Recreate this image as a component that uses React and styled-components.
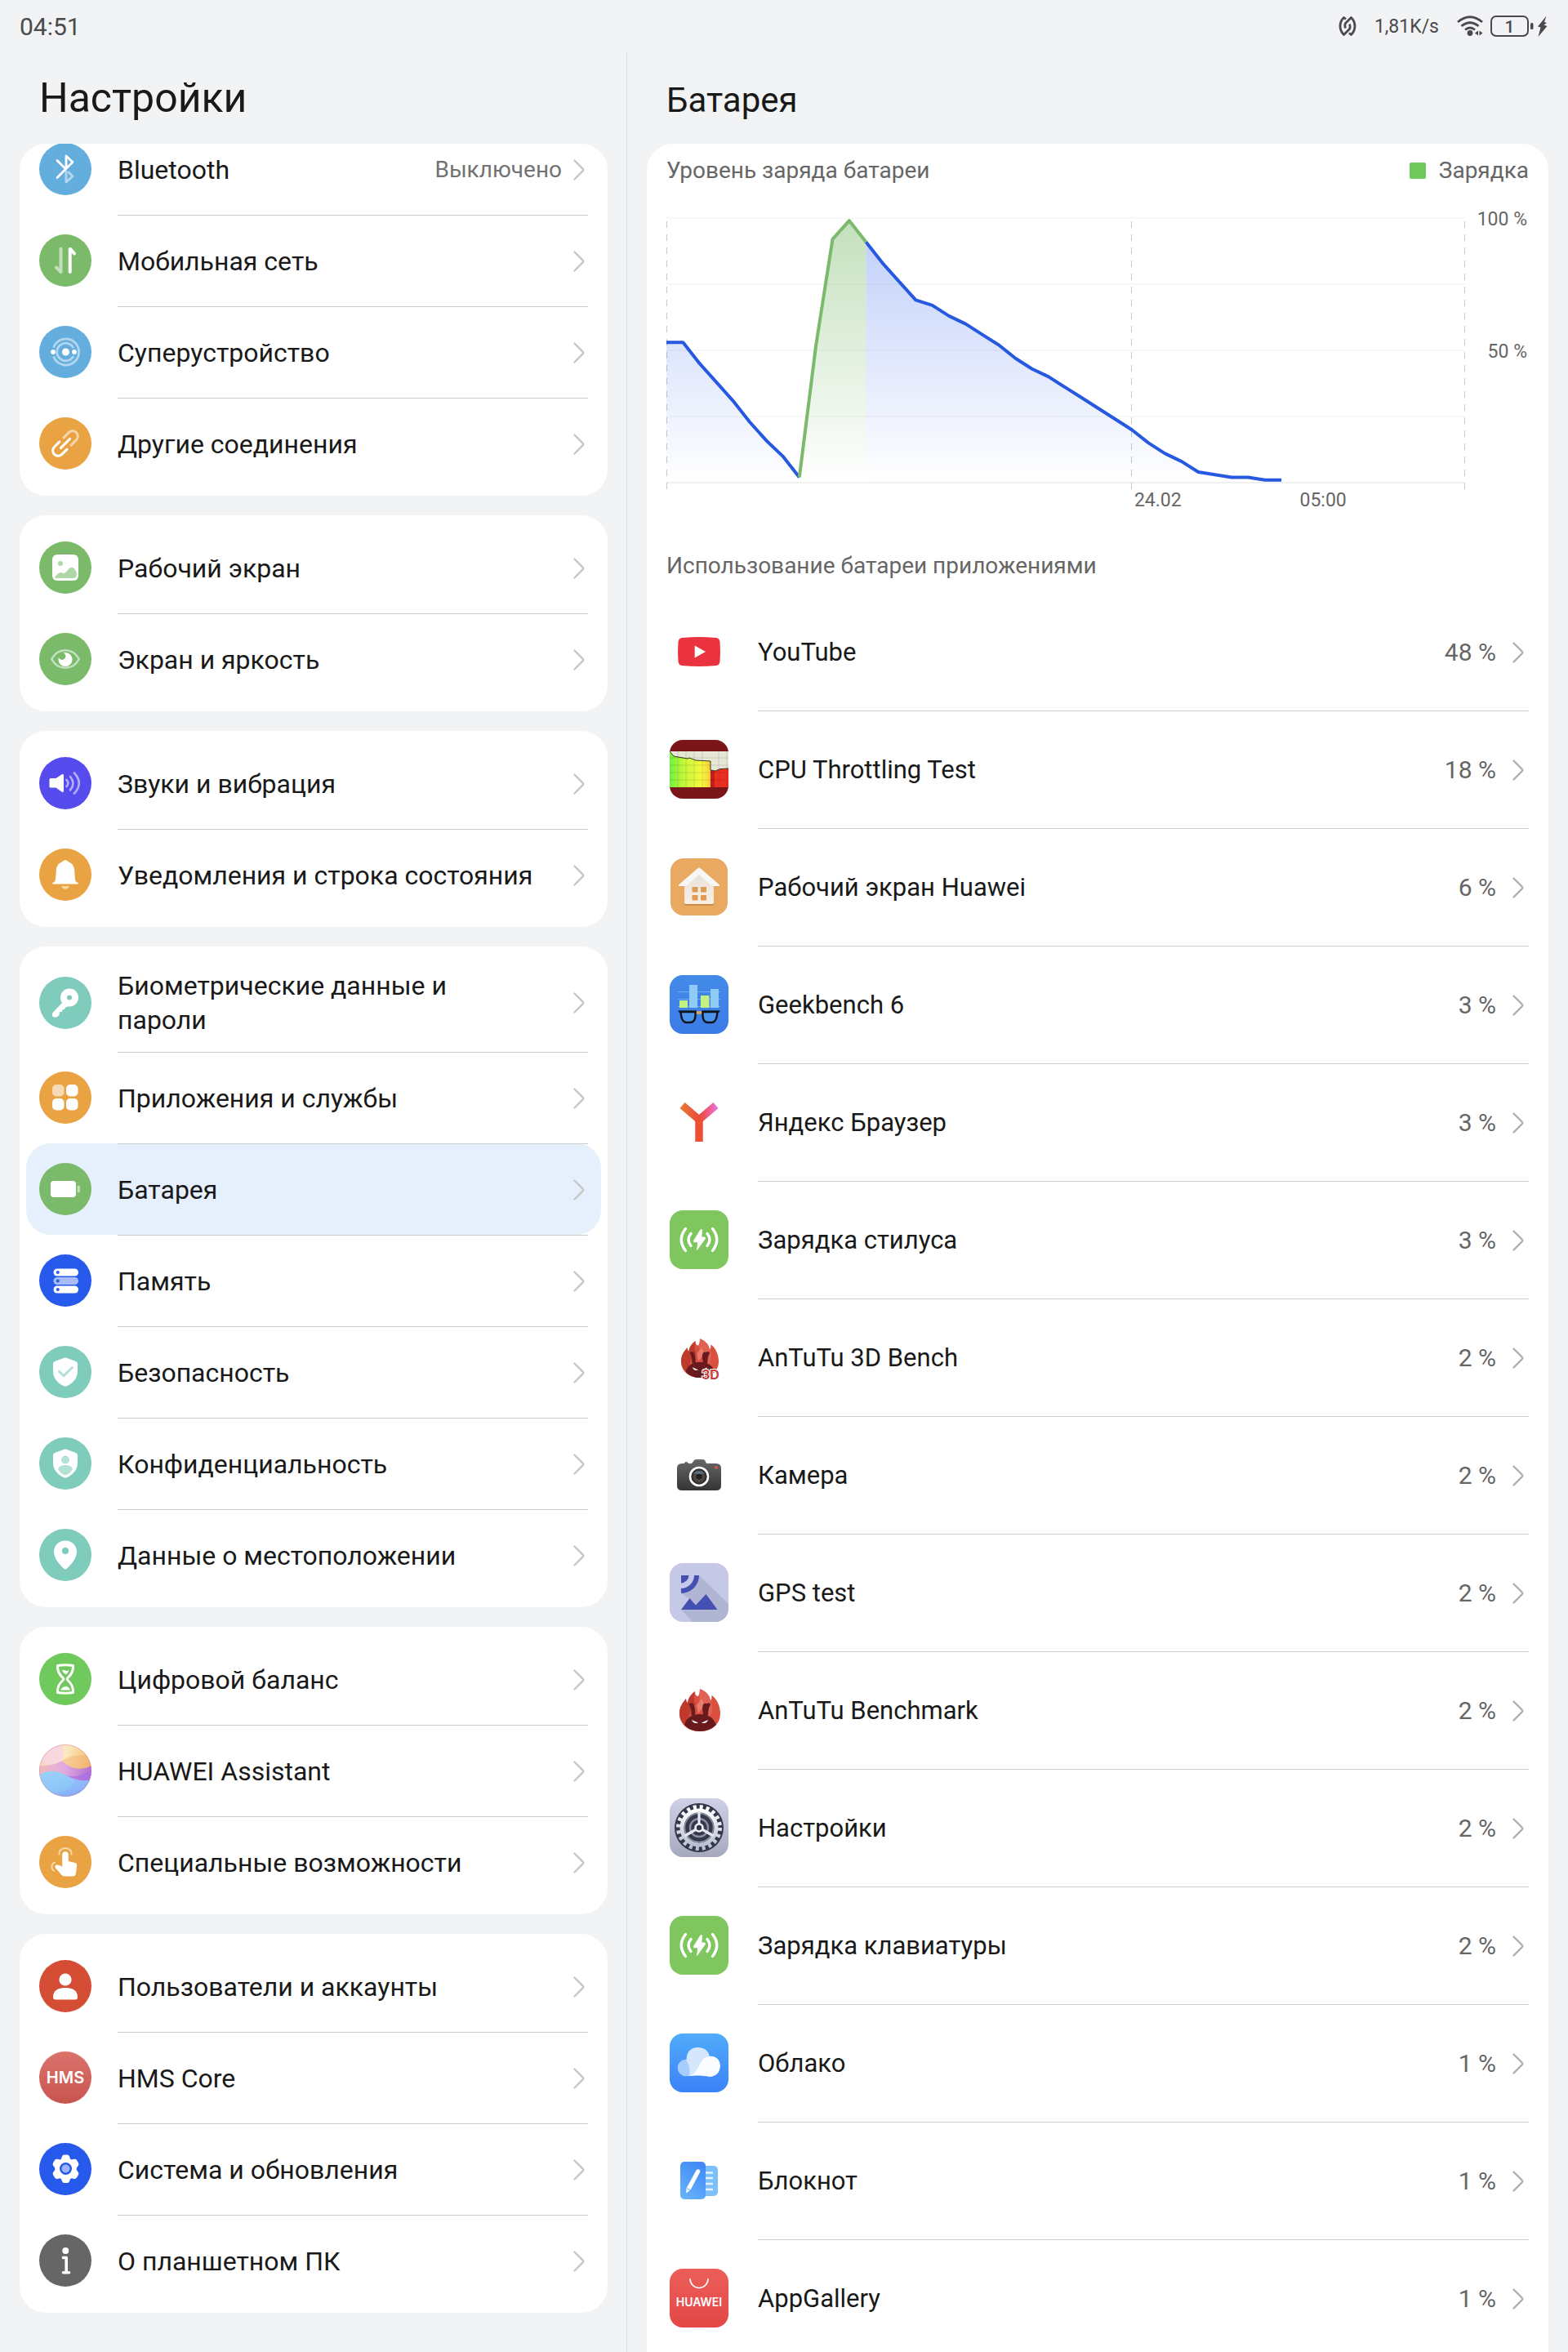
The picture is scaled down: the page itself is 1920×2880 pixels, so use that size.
import React from 'react';
import styled, {createGlobalStyle} from 'styled-components';

const FontStack = 'Roboto, "Noto Sans", "Liberation Sans", sans-serif';
const BlueColor = '#64AEDD';
const GreenColor = '#7BBA6B';
const OrangeColor = '#EAA342';
const TealColor = '#7FCCBD';
const DeepBlueColor = '#2659EC';

const GlobalStyle = createGlobalStyle`
* {
  box-sizing: border-box;
}
body {
  margin: 0;
  background: #f1f3f5;
  color: #191919;
  font-family: ${FontStack};
}
`;

const Screen = styled.div`
  display: flex;
  flex-direction: column;
  height: 100vh;
  overflow: hidden;
`;
const StatusBar = styled.header`
  display: flex;
  align-items: center;
  justify-content: space-between;
  flex: none;
  height: 64px;
  padding: 0 24px;
  color: #4a4a4c;
`;
const Clock = styled.time`
  font-size: 30px;
`;
const StatusIcons = styled.div`
  display: flex;
  align-items: center;
  gap: 22px;
`;
const Speed = styled.span`
  font-size: 23px;
`;
const StatusGroup = styled.div`
  display: flex;
  align-items: center;
  gap: 8px;
`;
const Panes = styled.div`
  display: flex;
  flex: 1;
  min-height: 0;
`;
const Sidebar = styled.nav`
  display: flex;
  flex-direction: column;
  flex: none;
  width: 40%;
  padding: 0 23px 0 24px;
  border-right: 1px solid #dcdee0;
`;
const Main = styled.main`
  display: flex;
  flex-direction: column;
  flex: 1;
  min-width: 0;
  padding: 0 24px;
`;
const PaneHeader = styled.div`
  display: flex;
  align-items: center;
  flex: none;
  height: 112px;
  padding: 0 24px;
`;
const Title = styled.h1`
  margin: 0;
  font-size: 50px;
  font-weight: 400;
  line-height: 56px;
`;
const PaneTitle = styled.h2`
  margin: 0;
  padding-top: 6px;
  font-size: 42px;
  font-weight: 400;
  line-height: 56px;
`;
const ScrollArea = styled.div`
  flex: 1;
  min-height: 0;
  overflow-y: auto;
  scrollbar-width: none;
  border-radius: 32px 32px 0 0;
`;
const Group = styled.ul`
  margin: ${({$scrolled}) => ($scrolled ? '-33px 0 24px' : '0 0 24px')};
  padding: 8px;
  list-style: none;
  background: #fff;
  border-radius: 32px;
`;
const MenuLink = styled.a`
  display: flex;
  align-items: center;
  gap: 32px;
  min-height: 112px;
  padding: 0 16px;
  border-radius: 30px;
  background: ${({$active}) => ($active ? '#e6f0fc' : 'transparent')};
  color: inherit;
  text-decoration: none;
`;
const MenuIcon = styled.svg`
  flex: none;
  width: 64px;
  height: 64px;
`;
const MenuBody = styled.div`
  display: flex;
  align-items: center;
  align-self: stretch;
  flex: 1;
  min-width: 0;
  padding: 18px 4px 18px 0;
  border-top: 1px solid ${({$first}) => ($first ? 'transparent' : '#cbcccd')};
`;
const MenuLabel = styled.span`
  flex: 1;
  margin-right: 44px;
  font-size: 32px;
  line-height: 42px;
`;
const MenuValue = styled.span`
  margin-right: 14px;
  color: #727272;
  font-size: 28px;
`;
const ChevronSvg = styled.svg`
  flex: none;
  width: 14px;
  height: 26px;
`;
const Card = styled.div`
  min-height: 100%;
  padding: 0 24px;
  background: #fff;
`;
const CardHeader = styled.div`
  display: flex;
  align-items: center;
  justify-content: space-between;
  height: 66px;
`;
const Caption = styled.h3`
  margin: 0;
  color: #666;
  font-size: 28px;
  font-weight: 400;
  line-height: 36px;
`;
const Legend = styled.span`
  display: flex;
  align-items: center;
  gap: 16px;
  color: #666;
  font-size: 28px;
  line-height: 36px;
`;
const LegendMark = styled.i`
  width: 20px;
  height: 20px;
  border-radius: 2px;
  background: #6fc95c;
`;
const ChartSvg = styled.svg`
  display: block;
  width: 100%;
  height: auto;
  font-family: ${FontStack};
`;
const UsageHeader = styled.div`
  display: flex;
  align-items: center;
  height: 66px;
`;
const AppList = styled.ul`
  margin: 0;
  padding: 0;
  list-style: none;
`;
const AppLink = styled.a`
  display: flex;
  align-items: center;
  gap: 36px;
  height: 144px;
  padding-left: 4px;
  color: inherit;
  text-decoration: none;
`;
const AppIcon = styled.svg`
  flex: none;
  width: 72px;
  height: 72px;
`;
const AppBody = styled.div`
  display: flex;
  align-items: center;
  align-self: stretch;
  flex: 1;
  padding-right: 6px;
  border-top: 1px solid ${({$first}) => ($first ? 'transparent' : '#cbcccd')};
`;
const AppName = styled.span`
  flex: 1;
  font-size: 31px;
  line-height: 42px;
`;
const AppUsage = styled.span`
  margin-right: 20px;
  color: #666;
  font-size: 30px;
`;

const Chevron = ({color = '#c6c6c6'}) => (
  <ChevronSvg viewBox="0 0 14 26" fill="none" stroke={color} strokeWidth="2.4" strokeLinecap="round" aria-hidden="true">
    <path d="M1.5 1.5 11.6 11.7Q12.8 13 11.6 14.3L1.5 24.5" />
  </ChevronSvg>
);

/* Menu glyphs, drawn on a 64 x 64 circle */
const menuGlyphs = {
  bluetooth: (
    <g fill="none" stroke="#fff" strokeWidth="2.8" strokeLinecap="round" strokeLinejoin="round">
      <path d="M22 21.5 32.5 32M22 42.5 41 23.5 33 16V31" />
      <path d="M33 35.5V48L41 40.8 36 36" opacity=".5" />
    </g>
  ),
  mobile: (
    <g fill="none" stroke="#fff" strokeWidth="4" strokeLinecap="round" strokeLinejoin="round">
      <g opacity=".55">
        <path d="M26.5 17.500V46" />
        <path d="M21 40.500 26 45.500" />
      </g>
      <path d="M37.700 18V46" />
      <path d="M38.200 18 43 23.500" />
    </g>
  ),
  superDevice: (
    <g fill="none" stroke="#fff" strokeWidth="2.8" strokeLinecap="round">
      <circle cx="32.5" cy="32" r="4.5" fill="#fff" stroke="none" />
      <circle cx="17" cy="32" r="2.9" fill="#fff" stroke="none" />
      <circle cx="43" cy="32" r="2.9" fill="#fff" stroke="none" />
      <g opacity=".5">
        <path d="M41.5 26A10.8 10.8 0 1 0 41.5 38" />
        <path d="M18 25.5A16 16 0 1 1 18 38.5" />
      </g>
    </g>
  ),
  link: (
    <g fill="none" stroke="#fff" strokeWidth="3" strokeLinecap="round" transform="rotate(-45 32 32)">
      <path d="M28.500 25.500H19.500a6.500 6.500 0 0 0 0 13H28.500M24 32H40" />
      <path d="M35.500 25.500H44.500a6.500 6.500 0 0 1 0 13H35.500" opacity=".55" />
    </g>
  ),
  wallpaper: (
    <g>
      <rect x="16" y="16" width="32" height="32" rx="6" fill="#fff" />
      <circle cx="26" cy="27" r="3" fill="#AFD8A6" />
      <path d="M19.3 43.5C22 40 25.5 37 28.5 38.5 31 40 32 38.5 34.500 35.500 37 32.500 40 30 43 33.500 45 36 46 38 46 40.500Q46 45 41.500 45H20.500Q18.300 45 19.300 43.500Z" fill="#AFD8A6" />
    </g>
  ),
  eye: (
    <g>
      <path d="M15.200 32C19 25 25 21.200 32 21.200S45 25 48.800 32C45 39 39 42.800 32 42.800S19 39 15.200 32Z" fill="none" stroke="#fff" strokeWidth="2.600" strokeLinejoin="round" opacity=".55" />
      <circle cx="32" cy="32.500" r="8.600" fill="#fff" />
      <circle cx="28" cy="28.500" r="4.400" fill={GreenColor} />
    </g>
  ),
  sound: (
    <g>
      <path d="M14 26H20.500L28.500 20.800Q30 20.800 30 22.500V41.500Q30 43.200 28.500 43.200L20.500 37.500H14Q12.500 37.500 12.500 36V27.500Q12.500 26 14 26Z" fill="#fff" />
      <g fill="none" stroke="#fff" strokeWidth="2.600" strokeLinecap="round" opacity=".55">
        <path d="M33.500 28Q37.500 32 33.500 36" />
        <path d="M38 24Q45 32 38 40.500" />
        <path d="M43 19.500Q54.500 32 43 44.500" />
      </g>
    </g>
  ),
  bell: (
    <g fill="#fff">
      <path d="M32 14.200C34.200 14.200 35.200 15.500 35.600 16.300 41 18 43 22.500 43.200 27L43.800 35.500C44 38 44.500 40.500 45.500 41.200L47.500 41.800Q48.600 43.500 47 43.500H17Q15.400 43.500 16.500 41.800L18.500 41.200C19.500 40.500 20 38 20.200 35.500L20.800 27C21 22.500 23 18 28.400 16.300 28.800 15.500 29.800 14.200 32 14.200Z" />
      <path d="M27 46H37Q35.500 49.700 32 49.700T27 46Z" opacity=".55" />
    </g>
  ),
  key: (
    <g>
      <circle cx="37" cy="25.500" r="11" fill="#fff" />
      <path d="M29 31 17 43.500Q16 44.500 16 46V47.500Q16 49.500 18 49.500H21.500L24.500 47 25 43 28 43 28.500 40.500 31.500 39.500 31.500 38 36 36Z" fill="#fff" />
      <circle cx="37" cy="25.500" r="3" fill={TealColor} />
    </g>
  ),
  apps: (
    <g fill="#fff">
      <rect x="16" y="16" width="14.500" height="14.500" rx="5" opacity=".6" />
      <rect x="33" y="16" width="14.500" height="14.500" rx="5" />
      <rect x="16" y="33" width="14.500" height="14.500" rx="5" />
      <rect x="33" y="33" width="14.500" height="14.500" rx="5" />
    </g>
  ),
  battery: (
    <g fill="#fff">
      <rect x="14" y="22" width="31" height="20" rx="4" />
      <rect x="46.500" y="27.500" width="3.500" height="9" rx="1.500" opacity=".5" />
    </g>
  ),
  storage: (
    <g fill="#fff">
      <rect x="17.500" y="17.500" width="30.500" height="9" rx="4.500" />
      <rect x="17.500" y="28" width="30.500" height="9" rx="4.500" opacity=".6" />
      <rect x="17.500" y="38.500" width="30.500" height="9" rx="4.500" />
      <g fill={DeepBlueColor}>
        <circle cx="22.800" cy="22" r="2" />
        <circle cx="22.800" cy="32.500" r="2" />
        <circle cx="22.800" cy="43" r="2" />
      </g>
    </g>
  ),
  shieldCheck: (
    <g>
      <path d="M30.500 14.700Q32 14 33.500 14.700L45 19Q47 20 47 22V31C47 40 41 46 33.500 49.300Q32 50 30.500 49.300C23 46 17 40 17 31V22Q17 20 19 19Z" fill="#fff" />
      <path d="M24.500 31.500 30 36.700 40.500 26.500" fill="none" stroke="#B3E0D7" strokeWidth="3" strokeLinecap="round" strokeLinejoin="round" />
    </g>
  ),
  shieldUser: (
    <g>
      <path d="M30.500 14.700Q32 14 33.500 14.700L45 19Q47 20 47 22V31C47 40 41 46 33.500 49.300Q32 50 30.500 49.300C23 46 17 40 17 31V22Q17 20 19 19Z" fill="#fff" />
      <circle cx="32" cy="27.500" r="5" fill="#B3E0D7" />
      <path d="M23 38.500C25 34.800 28 34 32 34S39 34.800 41 38.500C39.500 42.500 36 45 32 46.500 28 45 24.500 42.500 23 38.500Z" fill="#B3E0D7" />
    </g>
  ),
  pin: (
    <g>
      <path d="M32 14.500C40 14.500 46 20.500 46 28 46 36 40 43 33.500 49Q32 50.500 30.500 49C24 43 18 36 18 28 18 20.500 24 14.500 32 14.500Z" fill="#fff" />
      <circle cx="32" cy="27" r="4.200" fill={TealColor} />
    </g>
  ),
  hourglass: (
    <g>
      <path d="M22.500 15.500Q32 14 41.500 15.500C42 22 39.500 26.500 35 30.500Q33.500 32 35 33.500C39.500 37.500 42 42 41.500 48.500Q32 50 22.500 48.500C22 42 24.500 37.500 29 33.500Q30.500 32 29 30.500C24.500 26.500 22 22 22.500 15.500Z" fill="none" stroke="#fff" strokeWidth="3" strokeLinejoin="round" />
      <path d="M28 21.500Q30 20.500 32 21.500T36.500 21Q36 24 32.500 26.500 29 24.500 28 21.500ZM26 45.500Q28 41.500 32 41T38 45.500Z" fill="#fff" />
    </g>
  ),
  touch: (
    <g>
      <path d="M28.200 23Q28.200 19.200 32 19.200T35.800 23V31L44 33Q46.300 33.700 46.200 36L45 46Q44.500 49.600 41 49.600H31.500Q29 49.600 27.500 48L19.700 39Q18.500 36.500 21 35.500 23.500 35 28.200 37.500Z" fill="#fff" />
      <g fill="none" stroke="#fff" strokeWidth="2" opacity=".55" strokeLinecap="round">
        <path d="M24.500 22.500C24 17.500 28 15 32 15S40 17.500 39.500 22.500" />
        <path d="M19 32.500C15 34 14 40 18 43" />
      </g>
    </g>
  ),
  user: (
    <g fill="#fff">
      <circle cx="32" cy="24" r="7.600" />
      <path d="M17 45.500C17 37.500 23 34 32 34S47 37.500 47 45.500Q47 48.500 44 48.500H20Q17 48.500 17 45.500Z" />
    </g>
  ),
  hms: (
    <text x="32" y="39" fill="#fff" fontSize="20" fontWeight="600" textAnchor="middle" fontFamily="Inter, sans-serif">HMS</text>
  ),
  gear: (
    <g>
      <path d="M28 16.500Q28.700 14.500 30.500 14.500H34.500Q36.300 14.500 37 16.500L38 19.500 39.500 20.400 43 19.700Q45 19.400 46 21L48 24.500Q49 26.300 47.700 28L45.800 30.500V33L47.700 35.700Q49 37.300 48 39L46 42.500Q45 44.200 43 43.900L39.500 43.300 38 44.200 37 47Q36.300 49 34.500 49H30.500Q28.700 49 28 47L27 44.200 25.500 43.300 22 43.900Q20 44.200 19 42.500L17 39Q16 37.300 17.300 35.700L19.200 33V30.500L17.300 28Q16 26.300 17 24.500L19 21Q20 19.400 22 19.700L25.500 20.400 27 19.500Z" fill="#fff" />
      <circle cx="32.500" cy="31.500" r="7.500" fill={DeepBlueColor} />
      <circle cx="32.500" cy="31.500" r="5" fill="#9DB5F7" />
    </g>
  ),
  info: (
    <g>
      <circle cx="32.300" cy="20" r="4" fill="#fff" />
      <path d="M29.500 28.500H33.200V46.500M29.500 46.700H36.500" fill="none" stroke="#fff" strokeWidth="3.600" strokeLinejoin="round" strokeLinecap="round" />
    </g>
  ),
};

const AssistantBall = () => (
  <g>
    <defs>
      <linearGradient id="ballTop" x1="0" y1="0" x2="1" y2="0.4">
        <stop offset="0" stopColor="#F6C9CB" />
        <stop offset=".5" stopColor="#FBE9BE" />
        <stop offset="1" stopColor="#F3B45E" />
      </linearGradient>
      <linearGradient id="ballMiddle" x1="0" y1="0" x2="1" y2="0">
        <stop offset="0" stopColor="#F2B3B9" />
        <stop offset=".5" stopColor="#D9A0E6" />
        <stop offset="1" stopColor="#A463E6" />
      </linearGradient>
      <linearGradient id="ballBottom" x1="0.2" y1="0" x2=".8" y2="1">
        <stop offset="0" stopColor="#9BD0F6" />
        <stop offset=".6" stopColor="#8CC6FA" />
        <stop offset="1" stopColor="#7E9AF5" />
      </linearGradient>
      <clipPath id="ballClip"><circle cx="32" cy="32" r="32" /></clipPath>
    </defs>
    <g clipPath="url(#ballClip)">
      <rect width="64" height="64" fill="url(#ballTop)" />
      <path d="M28 20Q40 11 64 14V30Q40 33 28 20Z" fill="#F2B277" opacity=".45" />
      <ellipse cx="16" cy="12" rx="14" ry="14" fill="#F7D6E4" opacity=".8" />
      <path d="M0 26Q16 27 28 20 44 36 64 26V48H0Z" fill="url(#ballMiddle)" opacity=".85" />
      <path d="M0 37Q16 28 33 38T64 43V64H0Z" fill="url(#ballBottom)" />
      <path d="M33 38Q48 46 64 43V31Q46 42 33 38Z" fill="#A36AF0" opacity=".6" />
      <path d="M28 64Q40 54 43 43 54 46 64 43V64Z" fill="#8FB2FB" opacity=".5" />
    </g>
    <circle cx="32" cy="32" r="31.500" fill="none" stroke="#C98AA8" opacity=".5" />
  </g>
);

const menuGroups = [
  [
    {id: 'bluetooth', label: 'Bluetooth', icon: 'bluetooth', color: BlueColor, value: 'Выключено'},
    {id: 'mobile', label: 'Мобильная сеть', icon: 'mobile', color: GreenColor},
    {id: 'super-device', label: 'Суперустройство', icon: 'superDevice', color: BlueColor},
    {id: 'connections', label: 'Другие соединения', icon: 'link', color: OrangeColor},
  ],
  [
    {id: 'home-screen', label: 'Рабочий экран', icon: 'wallpaper', color: GreenColor},
    {id: 'display', label: 'Экран и яркость', icon: 'eye', color: GreenColor},
  ],
  [
    {id: 'sound', label: 'Звуки и вибрация', icon: 'sound', color: '#564BED'},
    {id: 'notifications', label: 'Уведомления и строка состояния', icon: 'bell', color: OrangeColor},
  ],
  [
    {id: 'biometrics', label: 'Биометрические данные и пароли', icon: 'key', color: TealColor},
    {id: 'apps', label: 'Приложения и службы', icon: 'apps', color: OrangeColor},
    {id: 'battery', label: 'Батарея', icon: 'battery', color: GreenColor, active: true},
    {id: 'storage', label: 'Память', icon: 'storage', color: DeepBlueColor},
    {id: 'security', label: 'Безопасность', icon: 'shieldCheck', color: TealColor},
    {id: 'privacy', label: 'Конфиденциальность', icon: 'shieldUser', color: TealColor},
    {id: 'location', label: 'Данные о местоположении', icon: 'pin', color: TealColor},
  ],
  [
    {id: 'balance', label: 'Цифровой баланс', icon: 'hourglass', color: '#70C95D'},
    {id: 'assistant', label: 'HUAWEI Assistant', icon: 'assistant'},
    {id: 'accessibility', label: 'Специальные возможности', icon: 'touch', color: OrangeColor},
  ],
  [
    {id: 'users', label: 'Пользователи и аккаунты', icon: 'user', color: '#D64D36'},
    {id: 'hms', label: 'HMS Core', icon: 'hms', color: 'url(#hmsFill)'},
    {id: 'system', label: 'Система и обновления', icon: 'gear', color: DeepBlueColor},
    {id: 'about', label: 'О планшетном ПК', icon: 'info', color: '#666666'},
  ],
];

const MenuItem = ({item, first}) => (
  <li>
    <MenuLink href={`#${item.id}`} $active={item.active} aria-current={item.active ? 'page' : undefined}>
      <MenuIcon viewBox="0 0 64 64" aria-hidden="true">
        {item.icon === 'hms' && (
          <linearGradient id="hmsFill" x1="0" y1="0" x2="0" y2="1">
            <stop offset="0" stopColor="#DB736D" />
            <stop offset="1" stopColor="#C9544F" />
          </linearGradient>
        )}
        {item.icon === 'assistant' ? <AssistantBall /> : <circle cx="32" cy="32" r="32" fill={item.color} />}
        {menuGlyphs[item.icon]}
      </MenuIcon>
      <MenuBody $first={first}>
        <MenuLabel>{item.label}</MenuLabel>
        {item.value && <MenuValue>{item.value}</MenuValue>}
        <Chevron />
      </MenuBody>
    </MenuLink>
  </li>
);

/* Battery level, one reading every 30 minutes */
const levels = [
  53, 53, 45, 38, 31, 23, 16, 10, 2, 52, 92, 99, 91, 83, 76, 69, 67, 63, 60, 56, 52, 47, 43, 40, 36, 32, 28, 24, 20,
  15, 11, 8, 4, 3, 2, 2, 1, 1,
];
const ChartWidth = 977;
const ChartTop = 25;
const ChartHeight = 324;
const pointX = (index) => (index * ChartWidth) / 48;
const pointY = (level) => ChartTop + ChartHeight * (1 - level / 100);
const linePath = (from, to) =>
  levels
    .slice(from, to + 1)
    .map((level, i) => `${i ? 'L' : 'M'}${pointX(from + i).toFixed(1)} ${pointY(level).toFixed(1)}`)
    .join('');
const areaPath = (from, to) => `${linePath(from, to)}V${ChartTop + ChartHeight}H${pointX(from).toFixed(1)}Z`;

const segments = [
  {from: 0, to: 8},
  {from: 12, to: 37},
  {from: 8, to: 12, charging: true},
];

const BatteryChart = () => (
  <ChartSvg viewBox="0 0 1056 418" role="img" aria-label="Уровень заряда батареи">
    <defs>
      <linearGradient id="useFill" gradientUnits="userSpaceOnUse" x1="0" y1={ChartTop} x2="0" y2={ChartTop + ChartHeight}>
        <stop offset="0" stopColor="#2659EC" stopOpacity=".3" />
        <stop offset="1" stopColor="#2659EC" stopOpacity="0" />
      </linearGradient>
      <linearGradient id="chargeFill" gradientUnits="userSpaceOnUse" x1="0" y1={ChartTop} x2="0" y2={ChartTop + ChartHeight}>
        <stop offset="0" stopColor={GreenColor} stopOpacity=".45" />
        <stop offset="1" stopColor={GreenColor} stopOpacity="0" />
      </linearGradient>
    </defs>
    {[100, 75, 50, 25, 0].map((level) => (
      <path key={level} d={`M0 ${pointY(level)}H${ChartWidth}`} stroke={level ? '#f7f7f7' : '#f0f0f0'} strokeWidth="2" />
    ))}
    {[0, 28, 48].map((index) => (
      <path key={index} d={`M${Math.floor(pointX(index)) + 0.5} 29V357`} stroke="#c8c8c8" strokeWidth="1" strokeDasharray="8 8" />
    ))}
    {segments.map(({from, to, charging}) => (
      <g key={from}>
        <path d={areaPath(from, to)} fill={charging ? 'url(#chargeFill)' : 'url(#useFill)'} />
        <path d={linePath(from, to)} fill="none" stroke={charging ? GreenColor : '#2659E0'} strokeWidth="4" strokeLinejoin="round" />
      </g>
    ))}
    <g fill="#666" fontSize="23">
      <text x="1054" y="34" textAnchor="end">100 %</text>
      <text x="1054" y="196" textAnchor="end">50 %</text>
      <text x={pointX(28) + 3} y="378">24.02</text>
      <text x={pointX(38) + 2} y="378">05:00</text>
    </g>
  </ChartSvg>
);

const Charger = () => (
  <g>
    <rect width="72" height="72" rx="16" fill="#7FC65F" />
    <path d="M38 23.500 29.500 37.500Q29 38.800 30.500 38.800H35L33.500 48.500 43.500 34.500Q44 33 42.500 33H38.800L39.500 24Z" fill="#fff" stroke="#fff" strokeLinejoin="round" />
    <g fill="none" stroke="#fff" strokeWidth="3.400" strokeLinecap="round">
      <path d="M19.500 22.500Q9 36 19.500 49.500M52.500 22.500Q63 36 52.500 49.500" />
      <path d="M26 28.500Q20 36 26 43.500M46 28.500Q52 36 46 43.500" />
    </g>
  </g>
);

const AntutuHead = () => (
  <g>
    <path d="M12 40C12 32 16 27 20 22Q20 26 22 27 23 19 31 13Q31 19 35 19 38 13 37 10C44 13 49 17 50 25Q52 22 51.500 18C58 22 62 32 62 40 62 54 51 62 37 62S12 54 12 40Z" fill="#D9503F" />
    <path d="M12 40C12 32 16 27 20 22Q20 26 22 27 23 19 31 13 28 24 32 29 24 34 21 56 12 50 12 40Z" fill="#BE3A2C" />
    <path d="M37 10C44 13 49 17 50 25 54 32 52 42 48 46L38 28Q35 24 37 10Z" fill="#E06253" />
    <path d="M39 22 43 30 35 40 33 30Z" fill="#EC8D80" opacity=".7" />
    <path d="M23.500 29Q25 26 28.500 28 32 32 31 42.500H26.500Q27 34 23.500 29ZM45.500 28Q49 26 50 29 47 34 47 42.500H41.500Q39 33 41 29 43 27 45.500 28Z" fill="#681A1E" />
    <path d="M18 54Q22 41 37 41T57 54Q49 62 37 62T18 54Z" fill="#681A1E" />
    <path d="M27 48 35 51.500Q29 53.500 27 48ZM47 48 39 51.500Q45 53.500 47 48Z" fill="#fff" />
  </g>
);

const appGlyphs = {
  youtube: (
    <g>
      <path d="M15 19Q36 17 57 19 61 19.500 61.500 24 62.500 36 61.500 48 61 52.500 57 53 36 55 15 53 11 52.500 10.500 48 9.500 36 10.500 24 11 19.500 15 19Z" fill="#EA333F" />
      <path d="M30.700 28.500 44 36 30.700 43.500Z" fill="#fff" />
    </g>
  ),
  cpu: (
    <g>
      <defs>
        <linearGradient id="cpuHeat" x1="0" y1="0" x2="1" y2="0">
          <stop offset="0" stopColor="#6FF23C" />
          <stop offset=".35" stopColor="#C6F83A" />
          <stop offset=".8" stopColor="#F8F83E" />
          <stop offset="1" stopColor="#FBC93A" />
        </linearGradient>
        <clipPath id="cpuClip"><rect width="72" height="72" rx="16" /></clipPath>
      </defs>
      <g clipPath="url(#cpuClip)">
        <rect width="72" height="72" fill="#7A1519" />
        <rect y="14" width="72" height="44" fill="#E7E7D6" />
        <path d="M0 14 5 20 22 23 24 22 32 25 50 26V58H0Z" fill="url(#cpuHeat)" />
        <path d="M50 37 56 38 62 35.500 72 35V58H50Z" fill="#EA2F22" />
        <path d="M50 37 55 38V58H50Z" fill="#C41F1C" />
        <path d="M0 14 5 20 22 23 24 22 32 25 50 26V37L56 38 62 35.500 72 35" fill="none" stroke="#3A3A24" />
        <path d="M10 14V58M20 14V58M30 14V58M40 14V58M60 14V58M70 14V58M0 22H72M0 31H72M0 40H72M0 49H72" stroke="#000" strokeWidth=".8" opacity=".15" />
      </g>
    </g>
  ),
  home: (
    <g>
      <defs>
        <linearGradient id="houseWall" x1="0" y1="0" x2="0" y2="1">
          <stop offset="0" stopColor="#E6E0DC" />
          <stop offset="1" stopColor="#FBEFE2" />
        </linearGradient>
      </defs>
      <rect x="1" y="1" width="70" height="70" rx="16" fill="#E9A961" />
      <path d="M18 57V35L36 20 54 35V57Q54 59 52 59H20Q18 59 18 57Z" fill="#B97B35" opacity=".6" />
      <path d="M18 55V34L36 19 54 34V55Q54 57 52 57H20Q18 57 18 55Z" fill="url(#houseWall)" />
      <path d="M11 33.500 34 13.500Q36 12 38 13.500L61 33.500V35H52L36 21 20 35H11Z" fill="#F8F7F6" />
      <path d="M27.500 36H34.500V42.500H27.500ZM38 36H45V42.500H38ZM27.500 46H34.500V52.500H27.500ZM38 46H45V52.500H38Z" fill="#DF9A54" />
    </g>
  ),
  geekbench: (
    <g>
      <defs>
        <linearGradient id="geekFill" x1="0" y1="0" x2="0" y2="1">
          <stop offset="0" stopColor="#438BE8" />
          <stop offset="1" stopColor="#3B7BE8" />
        </linearGradient>
      </defs>
      <rect width="72" height="72" rx="16" fill="url(#geekFill)" />
      <path d="M10 20.500H62M10 29.500H62M10 38.500H62" stroke="#6FAAF0" strokeWidth="1" />
      <path d="M12 31H22V40H12ZM38 25H48.500V40H38Z" fill="#C3F283" />
      <path d="M24 12H34V40H24ZM50 17H60V40H50Z" fill="#90CBF8" />
      <path d="M31 46H41" stroke="#DFA468" strokeWidth="3.500" />
      <path d="M13.500 45H31.500C32 53 30.500 58 25 58H20.500C15.500 58 14 52 13.500 45ZM40.500 45H58.500C58 52 56.500 58 51.500 58H47C41.500 58 40 53 40.500 45Z" fill="#4C93EC" stroke="#0F141C" strokeWidth="2.400" />
      <path d="M10 43.500H33L31.500 46H12ZM39 43.500H62L60 46H40.500Z" fill="#0F141C" />
    </g>
  ),
  yandex: (
    <g fill="none">
      <defs>
        <linearGradient id="yaFill" gradientUnits="userSpaceOnUse" x1="12" y1="20" x2="60" y2="18">
          <stop offset="0" stopColor="#E87B34" />
          <stop offset=".5" stopColor="#EA4B39" />
          <stop offset=".7" stopColor="#EC5878" />
          <stop offset="1" stopColor="#E879E8" />
        </linearGradient>
      </defs>
      <path d="M15.500 15.500 36 33 56.500 15.500" stroke="url(#yaFill)" strokeWidth="9.500" strokeLinejoin="round" />
      <path d="M36 31V60" stroke="#EE4F35" strokeWidth="9.500" />
    </g>
  ),
  charger: <Charger />,
  antutu3d: (
    <g>
      <g transform="translate(3 4) scale(.92)"><AntutuHead /></g>
      <text x="39" y="63" fill="#C44038" stroke="#fff" strokeWidth="2" paintOrder="stroke" fontSize="16" fontWeight="700" fontFamily="Inter, sans-serif">3D</text>
    </g>
  ),
  camera: (
    <g>
      <defs>
        <linearGradient id="cameraFill" x1="0" y1="0" x2="0" y2="1">
          <stop offset="0" stopColor="#686868" />
          <stop offset="1" stopColor="#343434" />
        </linearGradient>
      </defs>
      <path d="M15 22H18Q18 20 20 20T23 22H27L30 18Q31 17 33 17H40Q42 17 43 18L45 22H57Q63 22 63 28V49Q63 55 57 55H15Q9 55 9 49V28Q9 22 15 22Z" fill="url(#cameraFill)" />
      <circle cx="36" cy="38" r="11" fill="#2E2E2E" stroke="#fff" strokeWidth="2.600" />
      <circle cx="36" cy="38" r="7.500" fill="#4A4742" />
      <circle cx="36" cy="38" r="3.500" fill="#1E1E1E" />
      <path d="M29 34Q36 28 43 34 36 36 29 34Z" fill="#5E6B78" />
      <circle cx="57" cy="27" r="2" fill="#D9574A" />
    </g>
  ),
  gps: (
    <g>
      <defs>
        <clipPath id="gpsClip"><rect width="72" height="72" rx="16" /></clipPath>
      </defs>
      <g clipPath="url(#gpsClip)">
        <rect width="72" height="72" fill="#C5C8E6" />
        <path d="M36 15 72 50V72H28L14 57 31 48 14 37Z" fill="#B0B5D3" />
      </g>
      <path d="M14 15H23.500A10 10 0 0 1 14 24.500Z" fill="#4450B2" />
      <path d="M33 15A19 19 0 0 1 14 34" fill="none" stroke="#4450B2" strokeWidth="6" />
      <path d="M14 57 24.500 43 32 51.500 44.500 38 58.500 57Z" fill="#4450B2" />
    </g>
  ),
  antutu: <AntutuHead />,
  settings: (
    <g fill="none">
      <defs>
        <linearGradient id="settingsFill" x1="0" y1="0" x2="0" y2="1">
          <stop offset="0" stopColor="#CFD2E6" />
          <stop offset="1" stopColor="#A6A9BE" />
        </linearGradient>
        <linearGradient id="gearFill" x1="0" y1="0" x2="0" y2="1">
          <stop offset="0" stopColor="#FFFFFF" />
          <stop offset="1" stopColor="#B9C0D0" />
        </linearGradient>
      </defs>
      <rect width="72" height="72" rx="16" fill="url(#settingsFill)" />
      <circle cx="36" cy="36" r="30" fill="#35374B" />
      <circle cx="36" cy="36" r="25.500" stroke="url(#gearFill)" strokeWidth="5" strokeDasharray="4 4.010" />
      <circle cx="36" cy="36" r="21" stroke="url(#gearFill)" strokeWidth="5" />
      <circle cx="36" cy="36" r="17.500" stroke="#8A8DA0" strokeWidth="1.500" />
      <circle cx="36" cy="36" r="11" stroke="#8A8DA0" strokeWidth="2.500" />
      <path d="M36 36V16M36 36 18.500 46M36 36 53.500 46" stroke="#E4E6F0" strokeWidth="3.200" />
      <circle cx="36" cy="36" r="4.500" fill="#35374B" stroke="#F1F2F8" strokeWidth="2.600" />
    </g>
  ),
  cloud: (
    <g>
      <defs>
        <linearGradient id="cloudFill" x1="0" y1="0" x2="0" y2="1">
          <stop offset="0" stopColor="#51ABFA" />
          <stop offset="1" stopColor="#3B82F7" />
        </linearGradient>
      </defs>
      <rect width="72" height="72" rx="16" fill="url(#cloudFill)" />
      <circle cx="20" cy="42" r="10.300" fill="#A9CDFB" />
      <path d="M20.500 33Q20.500 17 35.500 17 48 18 49 30L34 50 24 52Q26 42 20.500 33Z" fill="#D5E7FD" />
      <path d="M22 52.300C32 50 33 44 39 34 45 24 62 26 62 40 61.500 48 56 53 49 53 40 51.500 32 51 22 52.300Z" fill="#FAFCFF" />
    </g>
  ),
  notepad: (
    <g>
      <defs>
        <linearGradient id="noteFill" x1="0.800" y1="0" x2=".3" y2="1">
          <stop offset="0" stopColor="#3F88F6" />
          <stop offset="1" stopColor="#65B1FA" />
        </linearGradient>
      </defs>
      <rect x="34" y="18" width="25" height="37" rx="5" fill="#7CC0F9" />
      <path d="M42 26.500H53M42 33H53M42 40H53M42 47H53" stroke="#E3F2FE" strokeWidth="2.400" />
      <rect x="13" y="13" width="31" height="46" rx="5" fill="url(#noteFill)" />
      <path d="M32.500 23.500Q34 21.500 36 22.500T37 26L25.500 47.500 20.500 51.500Q20 51 20.500 45.500Z" fill="#fff" />
      <path d="M21 45.500 25.500 48" stroke="#5AA5F9" />
    </g>
  ),
  appGallery: (
    <g>
      <defs>
        <linearGradient id="galleryFill" x1="0" y1="0" x2="0" y2="1">
          <stop offset="0" stopColor="#EC5E59" />
          <stop offset="1" stopColor="#E34746" />
        </linearGradient>
      </defs>
      <rect width="72" height="72" rx="16" fill="url(#galleryFill)" />
      <path d="M25 12.500A11 11 0 0 0 47 12.500" fill="none" stroke="#fff" strokeWidth="1.600" strokeLinecap="round" />
      <text x="36" y="46" fill="#fff" fontSize="14" fontWeight="600" textAnchor="middle" fontFamily="Inter, sans-serif">HUAWEI</text>
    </g>
  ),
};

const apps = [
  {name: 'YouTube', icon: 'youtube', usage: 48},
  {name: 'CPU Throttling Test', icon: 'cpu', usage: 18},
  {name: 'Рабочий экран Huawei', icon: 'home', usage: 6},
  {name: 'Geekbench 6', icon: 'geekbench', usage: 3},
  {name: 'Яндекс Браузер', icon: 'yandex', usage: 3},
  {name: 'Зарядка стилуса', icon: 'charger', usage: 3},
  {name: 'AnTuTu 3D Bench', icon: 'antutu3d', usage: 2},
  {name: 'Камера', icon: 'camera', usage: 2},
  {name: 'GPS test', icon: 'gps', usage: 2},
  {name: 'AnTuTu Benchmark', icon: 'antutu', usage: 2},
  {name: 'Настройки', icon: 'settings', usage: 2},
  {name: 'Зарядка клавиатуры', icon: 'charger', usage: 2},
  {name: 'Облако', icon: 'cloud', usage: 1},
  {name: 'Блокнот', icon: 'notepad', usage: 1},
  {name: 'AppGallery', icon: 'appGallery', usage: 1},
];

const AppItem = ({app, first}) => (
  <li>
    <AppLink href={`#app-${app.icon}`}>
      <AppIcon viewBox="0 0 72 72" aria-hidden="true">{appGlyphs[app.icon]}</AppIcon>
      <AppBody $first={first}>
        <AppName>{app.name}</AppName>
        <AppUsage>{app.usage} %</AppUsage>
        <Chevron color="#b0b0b0" />
      </AppBody>
    </AppLink>
  </li>
);

const NfcIcon = () => (
  <svg width="22" height="26" viewBox="0 0 22 26" fill="none" stroke="#4a4a4c" strokeWidth="2.800" strokeLinejoin="round" aria-hidden="true">
    <path d="M9 4.500 6.500 2.500Q2 7 2 13T6.500 23.500L13 17Q15 15 13.500 10.500" />
    <path d="M13 21.500 15.500 23.500Q20 19 20 13T15.500 2.500L9 9Q7 11 8.500 15.500" />
  </svg>
);

const WifiIcon = () => (
  <svg width="32" height="26" viewBox="0 0 32 26" fill="none" stroke="#4a4a4c" strokeWidth="2.800" aria-hidden="true">
    <path d="M1 8Q16-4.500 31 8M5.500 13Q16 4.500 26.500 13M10 17.500Q16 12.500 22 17.500" />
    <circle cx="16" cy="21.500" r="3.400" fill="#4a4a4c" stroke="none" />
    <path d="M22 21.500 26 18.500V24.500ZM31.500 21.500 27.500 18.500V24.500Z" fill="#4a4a4c" stroke="none" />
  </svg>
);

const BatteryIcon = () => (
  <svg width="72" height="28" viewBox="0 0 72 28" fill="none" aria-hidden="true">
    <rect x="2" y="2" width="45" height="24" rx="6" stroke="#4a4a4c" strokeWidth="2" />
    <rect x="50" y="10" width="3.500" height="8" rx="1.500" fill="#4a4a4c" />
    <text x="24.500" y="21.500" fill="#4a4a4c" fontSize="21" fontWeight="500" textAnchor="middle">1</text>
    <path d="M69.500 1.500 59 14.500 62.500 15.500 59.500 27 70.500 14 66.500 12.500 70 10 67 9Z" fill="#4a4a4c" />
  </svg>
);

const App = () => (
  <Screen>
    <GlobalStyle />
    <StatusBar>
      <Clock>04:51</Clock>
      <StatusIcons>
        <NfcIcon />
        <Speed>1,81K/s</Speed>
        <StatusGroup>
          <WifiIcon />
          <BatteryIcon />
        </StatusGroup>
      </StatusIcons>
    </StatusBar>
    <Panes>
      <Sidebar>
        <PaneHeader>
          <Title>Настройки</Title>
        </PaneHeader>
        <ScrollArea>
          {menuGroups.map((items, i) => (
            <Group key={items[0].id} $scrolled={i === 0}>
              {items.map((item, j) => (
                <MenuItem key={item.id} item={item} first={j === 0} />
              ))}
            </Group>
          ))}
        </ScrollArea>
      </Sidebar>
      <Main>
        <PaneHeader>
          <PaneTitle>Батарея</PaneTitle>
        </PaneHeader>
        <ScrollArea>
          <Card>
            <CardHeader>
              <Caption>Уровень заряда батареи</Caption>
              <Legend><LegendMark />Зарядка</Legend>
            </CardHeader>
            <BatteryChart />
            <UsageHeader>
              <Caption>Использование батареи приложениями</Caption>
            </UsageHeader>
            <AppList>
              {apps.map((app, i) => (
                <AppItem key={app.name} app={app} first={i === 0} />
              ))}
            </AppList>
          </Card>
        </ScrollArea>
      </Main>
    </Panes>
  </Screen>
);

export default App;
